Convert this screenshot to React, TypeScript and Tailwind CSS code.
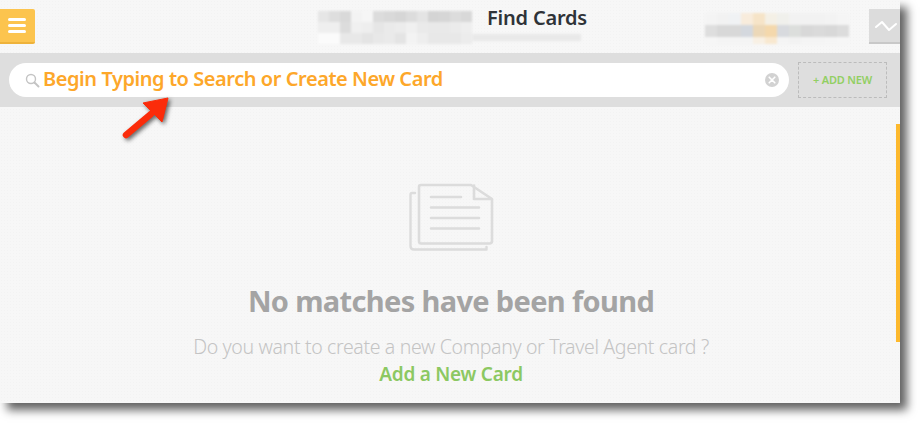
import React from "react";

const leftRows = [
  ["#e6e6e6","#dedede","#d9d9d9","#f3f3f3","#f6f6f6","#dcdcdc","#d9d9d9","#d6d6d6","#dcdcdc","#e4e4e4","#d4d4d4","#d6d6d6","#dcdcdc","#d8d8d8"],
  ["#efefef","#efefef","#dcdcdc","#f0f0f0","#eeeeee","#e6e6e6","#eaeaea","#ececec","#f0f0f0","#eaeaea","#e9e9e9","#e9e9e9","#ebebeb","#eeeeee"],
  ["#fbfbfb","#fbfbfb","#e8e8e8","#e8e8e8","#e4e4e4","#e8e8e8","#eaeaea","#e4e4e4","#f3f3f3","#eeeeee","#e8e8e8","#e8e8e8","#e8e8e8","#ececec"],
];
const rightRows = [
  ["#f4f4f4","#f2f2f2","#f0f2f4","#f8ecdc","#f6e4c8","#f4f0e6","#f0f0ec","#f2f2f2","#f2f2f2","#f2f2f2","#f3f3f3","#f5f5f5"],
  ["#dedede","#d8d8d8","#d8d8d8","#d4d8de","#ecd8b8","#f4d8ac","#d8dade","#dcdedc","#d8d8d8","#dadada","#d8d8d8","#dcdcdc"],
  ["#f6f6f6","#f4f4f4","#f4f4f4","#f4f4f4","#f8f0e4","#f8e8d0","#f4f4f4","#f2f2f2","#f4f4f4","#f4f4f4","#f5f5f5","#f6f6f6"],
];

function Mosaic({ rows, cell, heights }: { rows: string[][]; cell: number; heights: number[] }) {
  return (
    <div className="flex flex-col blur-[1px]">
      {rows.map((r, i) => (
        <div key={i} className="flex">
          {r.map((c, j) => (
            <div key={j} style={{ background: c, width: cell, height: heights[i] }} />
          ))}
        </div>
      ))}
    </div>
  );
}

export default function App() {
  return (
    <div className="w-[920px] h-[423px] bg-white overflow-hidden font-['Noto_Sans',sans-serif]">
      <div className="relative w-[900px] h-[403px] bg-[#f7f7f7] bg-[radial-gradient(#f3f3f3_1px,transparent_1px)] bg-[length:3px_3px] shadow-[7px_7px_9px_rgba(0,0,0,0.62)] flex flex-col">
        {/* header */}
        <div className="h-[53px] flex items-start">
          <div className="shrink-0 mt-[9px] w-[34.5px] h-[35px] bg-[#fcc44e] border-b-2 border-[#eeb23a] rounded-r-[2px] flex flex-col items-center justify-center gap-[3px]">
            <div className="w-[18px] h-[3px] rounded-full bg-white" />
            <div className="w-[18px] h-[3px] rounded-full bg-white" />
            <div className="w-[18px] h-[3px] rounded-full bg-white" />
          </div>
          <div className="shrink-0 ml-[283.5px] mt-[11px]">
            <Mosaic rows={leftRows} cell={11} heights={[11, 11, 11]} />
          </div>
          <div className="shrink-0 w-[115px] flex flex-col">
            <div className="pl-[15px] mt-[4px] h-[27px] text-[20px] leading-[27px] font-semibold tracking-[-0.2px] text-[#2f3338] whitespace-nowrap">
              Find Cards
            </div>
            <div className="mt-[3px] w-[109px] h-[7px] bg-[#e9e9e9] blur-[1px]" />
          </div>
          <div className="shrink-0 ml-[118px] mt-[13px]">
            <Mosaic rows={rightRows} cell={12} heights={[12, 12, 7]} />
          </div>
          <div className="shrink-0 ml-[20px] mt-[9px] w-[31px] h-[35px] bg-[#dcdcdc] border-b-2 border-[#c8c8c8] flex items-center justify-center">
            <svg width="24" height="14" viewBox="0 0 24 14" fill="none" stroke="#fff" strokeWidth="2" strokeLinejoin="round" strokeLinecap="round" className="ml-[3px] shrink-0">
              <path d="M2 8 L8 3 L15 11 L22 5" />
            </svg>
          </div>
        </div>

        {/* search bar */}
        <div className="h-[54px] bg-[#dedede] flex items-center pl-[9px]">
          <div className="w-[780px] h-[34px] bg-white rounded-full flex items-center pl-[16px] pr-[10px]">
            <svg width="15" height="15" viewBox="0 0 15 15" fill="none" className="mr-[3px] shrink-0">
              <circle cx="6" cy="6" r="4.5" stroke="#c4c4c4" strokeWidth="1.4" />
              <path d="M9.5 9.5 L13.5 13.5" stroke="#c4c4c4" strokeWidth="2" strokeLinecap="round" />
            </svg>
            <span className="mb-[2px] text-[20px] font-semibold tracking-[-0.44px] text-[#fda72a] whitespace-nowrap">
              Begin Typing to Search or Create New Card
            </span>
            <div className="ml-auto w-[14px] h-[14px] rounded-full bg-[#d2d2d2] flex items-center justify-center">
              <svg width="8" height="8" viewBox="0 0 8 8" stroke="#fff" strokeWidth="1.6" strokeLinecap="round">
                <path d="M1.2 1.2 L6.8 6.8 M6.8 1.2 L1.2 6.8" />
              </svg>
            </div>
          </div>
          <div className="ml-[9px] w-[89px] h-[36px] border border-dashed border-[#bcbcbc] flex items-center justify-center text-[11px] font-semibold tracking-[-0.2px] text-[#92cf63]">
            + ADD NEW
          </div>
        </div>

        {/* empty state */}
        <div className="flex-1 flex flex-col items-center pl-[2px]">
          <svg width="86" height="70" viewBox="0 0 86 70" fill="none" className="mt-[76px] ml-[2px]" stroke="#dcdcdc" strokeLinecap="round" strokeLinejoin="round">
            <path d="M6 10 H3 Q1.5 10 1.5 12 V63 Q1.5 66.5 5 66.5 H77.5 V64" strokeWidth="2.4" />
            <path d="M10 4 Q10 2 12 2 H62 L83 16 V58 Q83 60.5 80.5 60.5 H12 Q10 60.5 10 58 Z" strokeWidth="2.6" />
            <path d="M65 2.5 V16 H82" strokeWidth="2.6" />
            <path d="M22 14 H52 M22 24.5 H70 M22 35 H70 M22 45.5 H70" strokeWidth="2.6" />
          </svg>
          <div className="mt-[28px] text-[29px] leading-[40px] font-bold tracking-[-0.65px] text-[#a4a4a4] whitespace-nowrap">
            No matches have been found
          </div>
          <div className="mt-[13px] text-[19.5px] leading-[26px] font-light tracking-[-0.35px] text-[#c4c4c4] whitespace-nowrap">
            Do you want to create a new Company or Travel Agent card ?
          </div>
          <div className="mt-[1px] text-[19px] leading-[26px] font-semibold tracking-[-0.25px] text-[#8cc862] whitespace-nowrap">
            Add a New Card
          </div>
        </div>

        {/* scroll indicator */}
        <div className="absolute right-0 top-[124px] w-[4px] h-[218px] bg-[#fdb92d]" />

        {/* annotation arrow */}
        <svg width="60" height="56" viewBox="0 0 60 56" className="absolute left-[118px] top-[94px] drop-shadow-[2px_2px_2px_rgba(0,0,0,0.6)]">
          <path d="M8 41 L33 20" stroke="#fb2c0a" strokeWidth="6.5" strokeLinecap="round" />
          <path d="M50 4 L25 9 L44 28 Z" fill="#fb2c0a" stroke="#fb2c0a" strokeWidth="1" strokeLinejoin="round" />
        </svg>
      </div>
    </div>
  );
}
